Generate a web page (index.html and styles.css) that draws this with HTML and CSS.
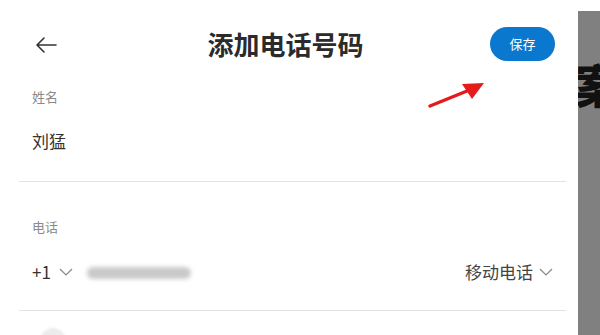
FILE: index.html
```html
<!DOCTYPE html>
<html lang="zh">
<head>
<meta charset="utf-8">
<link rel="stylesheet" href="styles.css">
</head>
<body>
<div class="page">
  <div class="main">
    <div class="header">
      <svg class="back" width="22" height="16" viewBox="0 0 22 16"><path d="M21 8H2M9 1L2 8l7 7" fill="none" stroke="#333" stroke-width="1.6" stroke-linecap="round" stroke-linejoin="round"/></svg>
      <div class="title">添加电话号码</div>
      <div class="save">保存</div>
    </div>
    <div class="section">
      <div class="label">姓名</div>
      <div class="value">刘猛</div>
    </div>
    <div class="divider"></div>
    <div class="section">
      <div class="label label-phone">电话</div>
      <div class="phone-row">
        <div class="left">
          <span class="value">+1</span>
          <svg class="chev" width="14" height="8" viewBox="0 0 14 8"><path d="M1 1l6 6 6-6" fill="none" stroke="#888" stroke-width="1.2"/></svg>
          <span class="blurred"></span>
        </div>
        <div class="right">
          <span class="type">移动电话</span>
          <svg class="chev" width="14" height="8" viewBox="0 0 14 8"><path d="M1 1l6 6 6-6" fill="none" stroke="#888" stroke-width="1.2"/></svg>
        </div>
      </div>
    </div>
    <div class="divider divider2"></div>
    <div class="circle"></div>
  </div>
  <div class="side"><span class="glyph">案</span></div>
  <svg class="annot" width="70" height="40" viewBox="0 0 70 40"><path d="M6 32L48 15" stroke="#e41b1b" stroke-width="3.4" stroke-linecap="round"/><path d="M60 9L38 10L48 25Z" fill="#e41b1b"/></svg>
</div>
</body>
</html>
```
FILE: styles.css
```css
html, body {
  margin: 0;
  padding: 0;
  background: #fff;
}
body {
  font-family: "Noto Sans CJK SC", "Noto Sans", sans-serif;
  color: #333;
  overflow: hidden;
}
.page {
  position: relative;
  display: flex;
  width: 600px;
  height: 335px;
  overflow: hidden;
}
.main {
  width: 547px;
  padding: 0 12px 0 19px;
  flex: none;
}
.header {
  display: flex;
  align-items: center;
  height: 34px;
  padding: 27px 11px 0 16px;
}
.back {
  flex: none;
  margin-top: 2px;
}
.title {
  flex: 1;
  text-align: center;
  font-size: 26px;
  font-weight: 700;
  line-height: 34px;
  padding-left: 24px;
  color: #2b2b2b;
}
.save {
  width: 65px;
  height: 34px;
  border-radius: 17px;
  background: #0b78d0;
  color: #fff;
  font-size: 13px;
  line-height: 34px;
  text-align: center;
}
.section {
  padding-left: 13px;
}
.label {
  font-size: 13px;
  line-height: 18px;
  color: #8a8a8a;
  margin-top: 27px;
}
.label-phone {
  margin-top: 36px;
}
.value {
  font-size: 17px;
  line-height: 24px;
  color: #333;
  margin-top: 23px;
  margin-bottom: 28px;
}
.divider {
  height: 1px;
  background: #e3e3e3;
}
.phone-row {
  display: flex;
  justify-content: space-between;
  align-items: center;
  height: 24px;
  margin-top: 24px;
  margin-bottom: 26px;
  padding-right: 13px;
}
.left, .right {
  display: flex;
  align-items: center;
}
.left .value {
  margin: 0;
}
.left .chev {
  margin-left: 8px;
}
.blurred {
  display: block;
  width: 104px;
  height: 12px;
  margin-left: 14px;
  margin-top: 1px;
  background: #c9c9c9;
  border-radius: 6px;
  filter: blur(2px);
}
.type {
  font-size: 17px;
  color: #444;
  line-height: 24px;
}
.right .chev {
  margin-left: 6px;
}
.circle {
  width: 26px;
  height: 26px;
  border-radius: 50%;
  background: #ececec;
  margin: 17px 0 0 21px;
  filter: blur(1px);
}
.side {
  flex: 1;
  margin-top: 11px;
  background: #808080;
  overflow: hidden;
  position: relative;
}
.glyph {
  display: block;
  font-size: 46px;
  font-weight: 900;
  color: #111;
  line-height: 50px;
  margin-top: 47px;
  margin-left: -3px;
}
.annot {
  position: absolute;
  left: 424px;
  top: 74px;
}
```
